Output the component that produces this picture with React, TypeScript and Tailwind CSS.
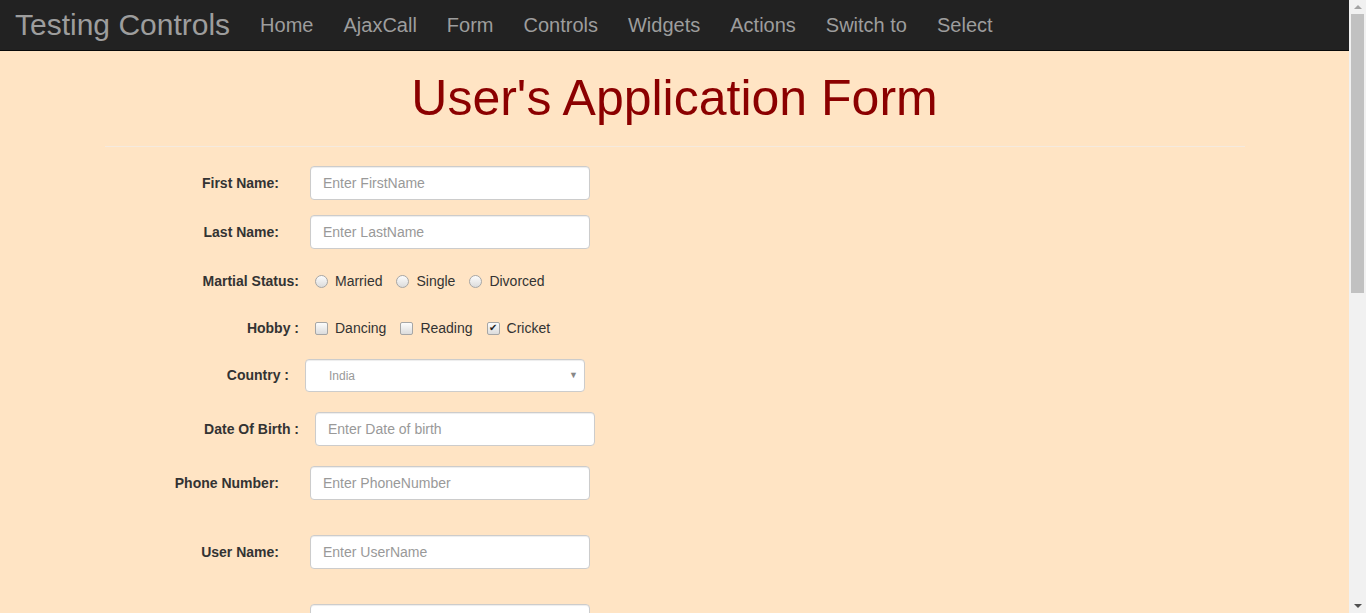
import React from "react"

// ─────────────────────────────────────────────────────────────────────────────
// Small pieces
// ─────────────────────────────────────────────────────────────────────────────

const FONT = { fontFamily: '"Liberation Sans", Arial, Helvetica, sans-serif' }

const NAV = ["Home", "AjaxCall", "Form", "Controls", "Widgets", "Actions", "Switch to", "Select"]

function TextInput({ placeholder, width = "w-[280px]" }: { placeholder: string; width?: string }) {
  return (
    <input
      type="text"
      placeholder={placeholder}
      className={`${width} h-[34px] rounded-[4px] border border-[#ccc] bg-white px-3 text-[14px] text-[#555] shadow-[inset_0_1px_1px_rgba(0,0,0,0.075)] outline-none placeholder:text-[#999]`}
    />
  )
}

function Radio({ label }: { label: string }) {
  return (
    <span className="flex items-center">
      <span className="w-[13px] h-[13px] rounded-full border border-[#a6a6a6] bg-gradient-to-b from-[#fcfcfc] to-[#dcdcdc] mr-[7px]" />
      <span>{label}</span>
    </span>
  )
}

function Check({ label, checked }: { label: string; checked?: boolean }) {
  return (
    <span className="flex items-center">
      <span className="w-[13px] h-[13px] rounded-[2px] border border-[#a6a6a6] bg-gradient-to-b from-[#fcfcfc] to-[#dcdcdc] mr-[7px] flex items-center justify-center text-[10px] leading-none text-[#222]">
        {checked ? "✔" : ""}
      </span>
      <span>{label}</span>
    </span>
  )
}

function Label({ text, width }: { text: string; width: string }) {
  return <label className={`${width} shrink-0 text-right font-bold text-[14px] text-[#333]`}>{text}</label>
}

function Scrollbar() {
  return (
    <div className="w-[17px] shrink-0 h-full bg-[#f1f1f1] flex flex-col items-center">
      <div className="h-[14px] flex items-center justify-center">
        <div className="w-0 h-0 border-l-[4px] border-r-[4px] border-b-[4px] border-l-transparent border-r-transparent border-b-[#a3a3a3]" />
      </div>
      <div className="w-[13px] h-[279px] bg-[#c1c1c1]" />
      <div className="flex-1" />
      <div className="h-[14px] flex items-center justify-center">
        <div className="w-0 h-0 border-l-[4px] border-r-[4px] border-t-[4px] border-l-transparent border-r-transparent border-t-[#505050]" />
      </div>
    </div>
  )
}

// ─────────────────────────────────────────────────────────────────────────────
// Main export
// ─────────────────────────────────────────────────────────────────────────────

export default function App() {
  return (
    <div className="h-[613px] overflow-hidden flex text-[14px] text-[#333]" style={FONT}>
      <div className="w-[1349px] shrink-0 h-full bg-[#ffe4c4]">
        {/* navbar */}
        <nav className="h-[51px] bg-[#222] border-b border-[#080808] flex items-center">
          <span className="pl-[15px] pr-[15px] text-[30px] leading-none text-[#9d9d9d]">Testing Controls</span>
          {NAV.map(n => (
            <a key={n} className="px-[15px] text-[20px] leading-none text-[#9d9d9d]">
              {n}
            </a>
          ))}
        </nav>

        <div className="w-[1170px] mx-auto px-[15px]">
          <h1 className="text-center text-[50px] leading-[1.1] text-[#8b0000] mt-[20px] mb-0">User's Application Form</h1>
          <hr className="mt-[20px] mb-[19px] border-0 border-t border-[#f5eadf]" />
        </div>

        <form>
          <div className="flex items-center">
            <Label text="First Name:" width="w-[279px]" />
            <div className="ml-[31px]"><TextInput placeholder="Enter FirstName" /></div>
          </div>

          <div className="flex items-center mt-[15px]">
            <Label text="Last Name:" width="w-[279px]" />
            <div className="ml-[31px]"><TextInput placeholder="Enter LastName" /></div>
          </div>

          <div className="flex items-center mt-[22px] h-[20px]">
            <Label text="Martial Status:" width="w-[299px]" />
            <div className="ml-[16px] flex items-center gap-[14px]">
              <Radio label="Married" />
              <Radio label="Single" />
              <Radio label="Divorced" />
            </div>
          </div>

          <div className="flex items-center mt-[27px] h-[20px]">
            <Label text="Hobby :" width="w-[299px]" />
            <div className="ml-[16px] flex items-center gap-[14px]">
              <Check label="Dancing" />
              <Check label="Reading" />
              <Check label="Cricket" checked />
            </div>
          </div>

          <div className="flex items-center mt-[21px]">
            <Label text="Country :" width="w-[289px]" />
            <div className="ml-[16px] w-[280px] h-[33px] rounded-[4px] border border-[#ccc] bg-white flex items-center justify-between pl-[23px] pr-[6px] shadow-[inset_0_1px_1px_rgba(0,0,0,0.075)]">
              <span className="text-[12px] text-[#999]">India</span>
              <span className="text-[9px] text-[#888]">▼</span>
            </div>
          </div>

          <div className="flex items-center mt-[20px]">
            <Label text="Date Of Birth :" width="w-[299px]" />
            <div className="ml-[16px]"><TextInput placeholder="Enter Date of birth" /></div>
          </div>

          <div className="flex items-center mt-[20px]">
            <Label text="Phone Number:" width="w-[279px]" />
            <div className="ml-[31px]"><TextInput placeholder="Enter PhoneNumber" /></div>
          </div>

          <div className="flex items-center mt-[35px]">
            <Label text="User Name:" width="w-[279px]" />
            <div className="ml-[31px]"><TextInput placeholder="Enter UserName" /></div>
          </div>

          <div className="flex items-start mt-[35px]">
            <div className="w-[279px] shrink-0" />
            <div className="ml-[31px]"><TextInput placeholder="Enter Email ID" /></div>
          </div>
        </form>
      </div>
      <Scrollbar />
    </div>
  )
}
